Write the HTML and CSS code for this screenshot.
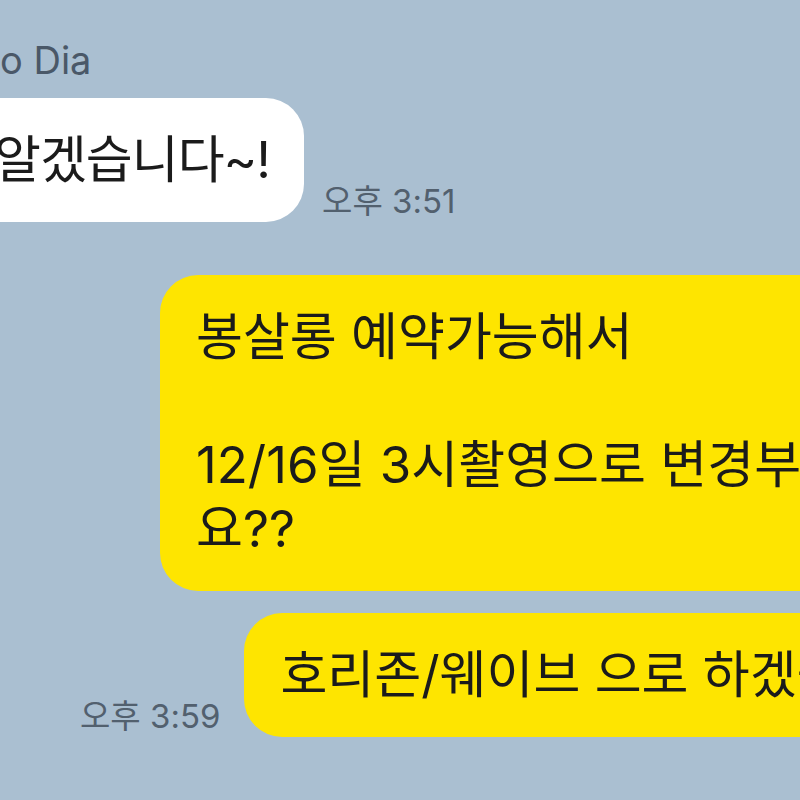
FILE: index.html
```html
<!DOCTYPE html>
<html lang="ko">
<head>
  <meta charset="UTF-8">
  <meta name="viewport" content="width=device-width, initial-scale=1.0">
  <title>Chat</title>
  <link rel="stylesheet" href="styles.css">
</head>
<body>
  <div class="chat">
    <div class="group in">
      <div class="sender">o Dia</div>
      <div class="row">
        <div class="bubble white">알겠습니다~!</div>
        <span class="time">오후 3:51</span>
      </div>
    </div>
    <div class="group out">
      <div class="row first">
        <div class="bubble yellow">봉살롱 예약가능해서<br><br>12/16일 3시촬영으로 변경부탁드려<br>요??</div>
      </div>
      <div class="row last">
        <span class="time">오후 3:59</span>
        <div class="bubble yellow">호리존/웨이브 으로 하겠습니다</div>
      </div>
    </div>
  </div>
</body>
</html>
```

FILE: styles.css
```css
html, body{
  margin: 0;
  height: 100%;
}
body{
  background-color: #aabfd1;
  overflow: hidden;
  font-family: Inter, "Noto Sans CJK KR", sans-serif;
}
.chat{
  width: 1300px;
  padding-top: 37px;
}
.sender{
  font-size: 38px;
  line-height: 46px;
  color: #4a5868;
  margin-bottom: 15px;
}
.row{
  display: flex;
  align-items: flex-end;
  gap: 18px;
}
.bubble{
  font-size: 51px;
  line-height: 64px;
  padding: 30px 38px;
  border-radius: 38px;
  color: #1b1b1b;
  white-space: nowrap;
}
.white{
  background-color: #fff;
  margin-left: -44px;
  padding-right: 34px;
  letter-spacing: -1px;
}
.yellow{
  background-color: #fee500;
  padding-left: 36px;
}
.time{
  font-size: 33px;
  line-height: 40px;
  color: #52606e;
  padding-bottom: 1px;
}
.out{
  margin-top: 53px;
  >.first{
    padding-left: 160px;
  }
  >.last{
    margin-top: 22px;
    padding-left: 80px;
    gap: 24px;
  }
}
```
